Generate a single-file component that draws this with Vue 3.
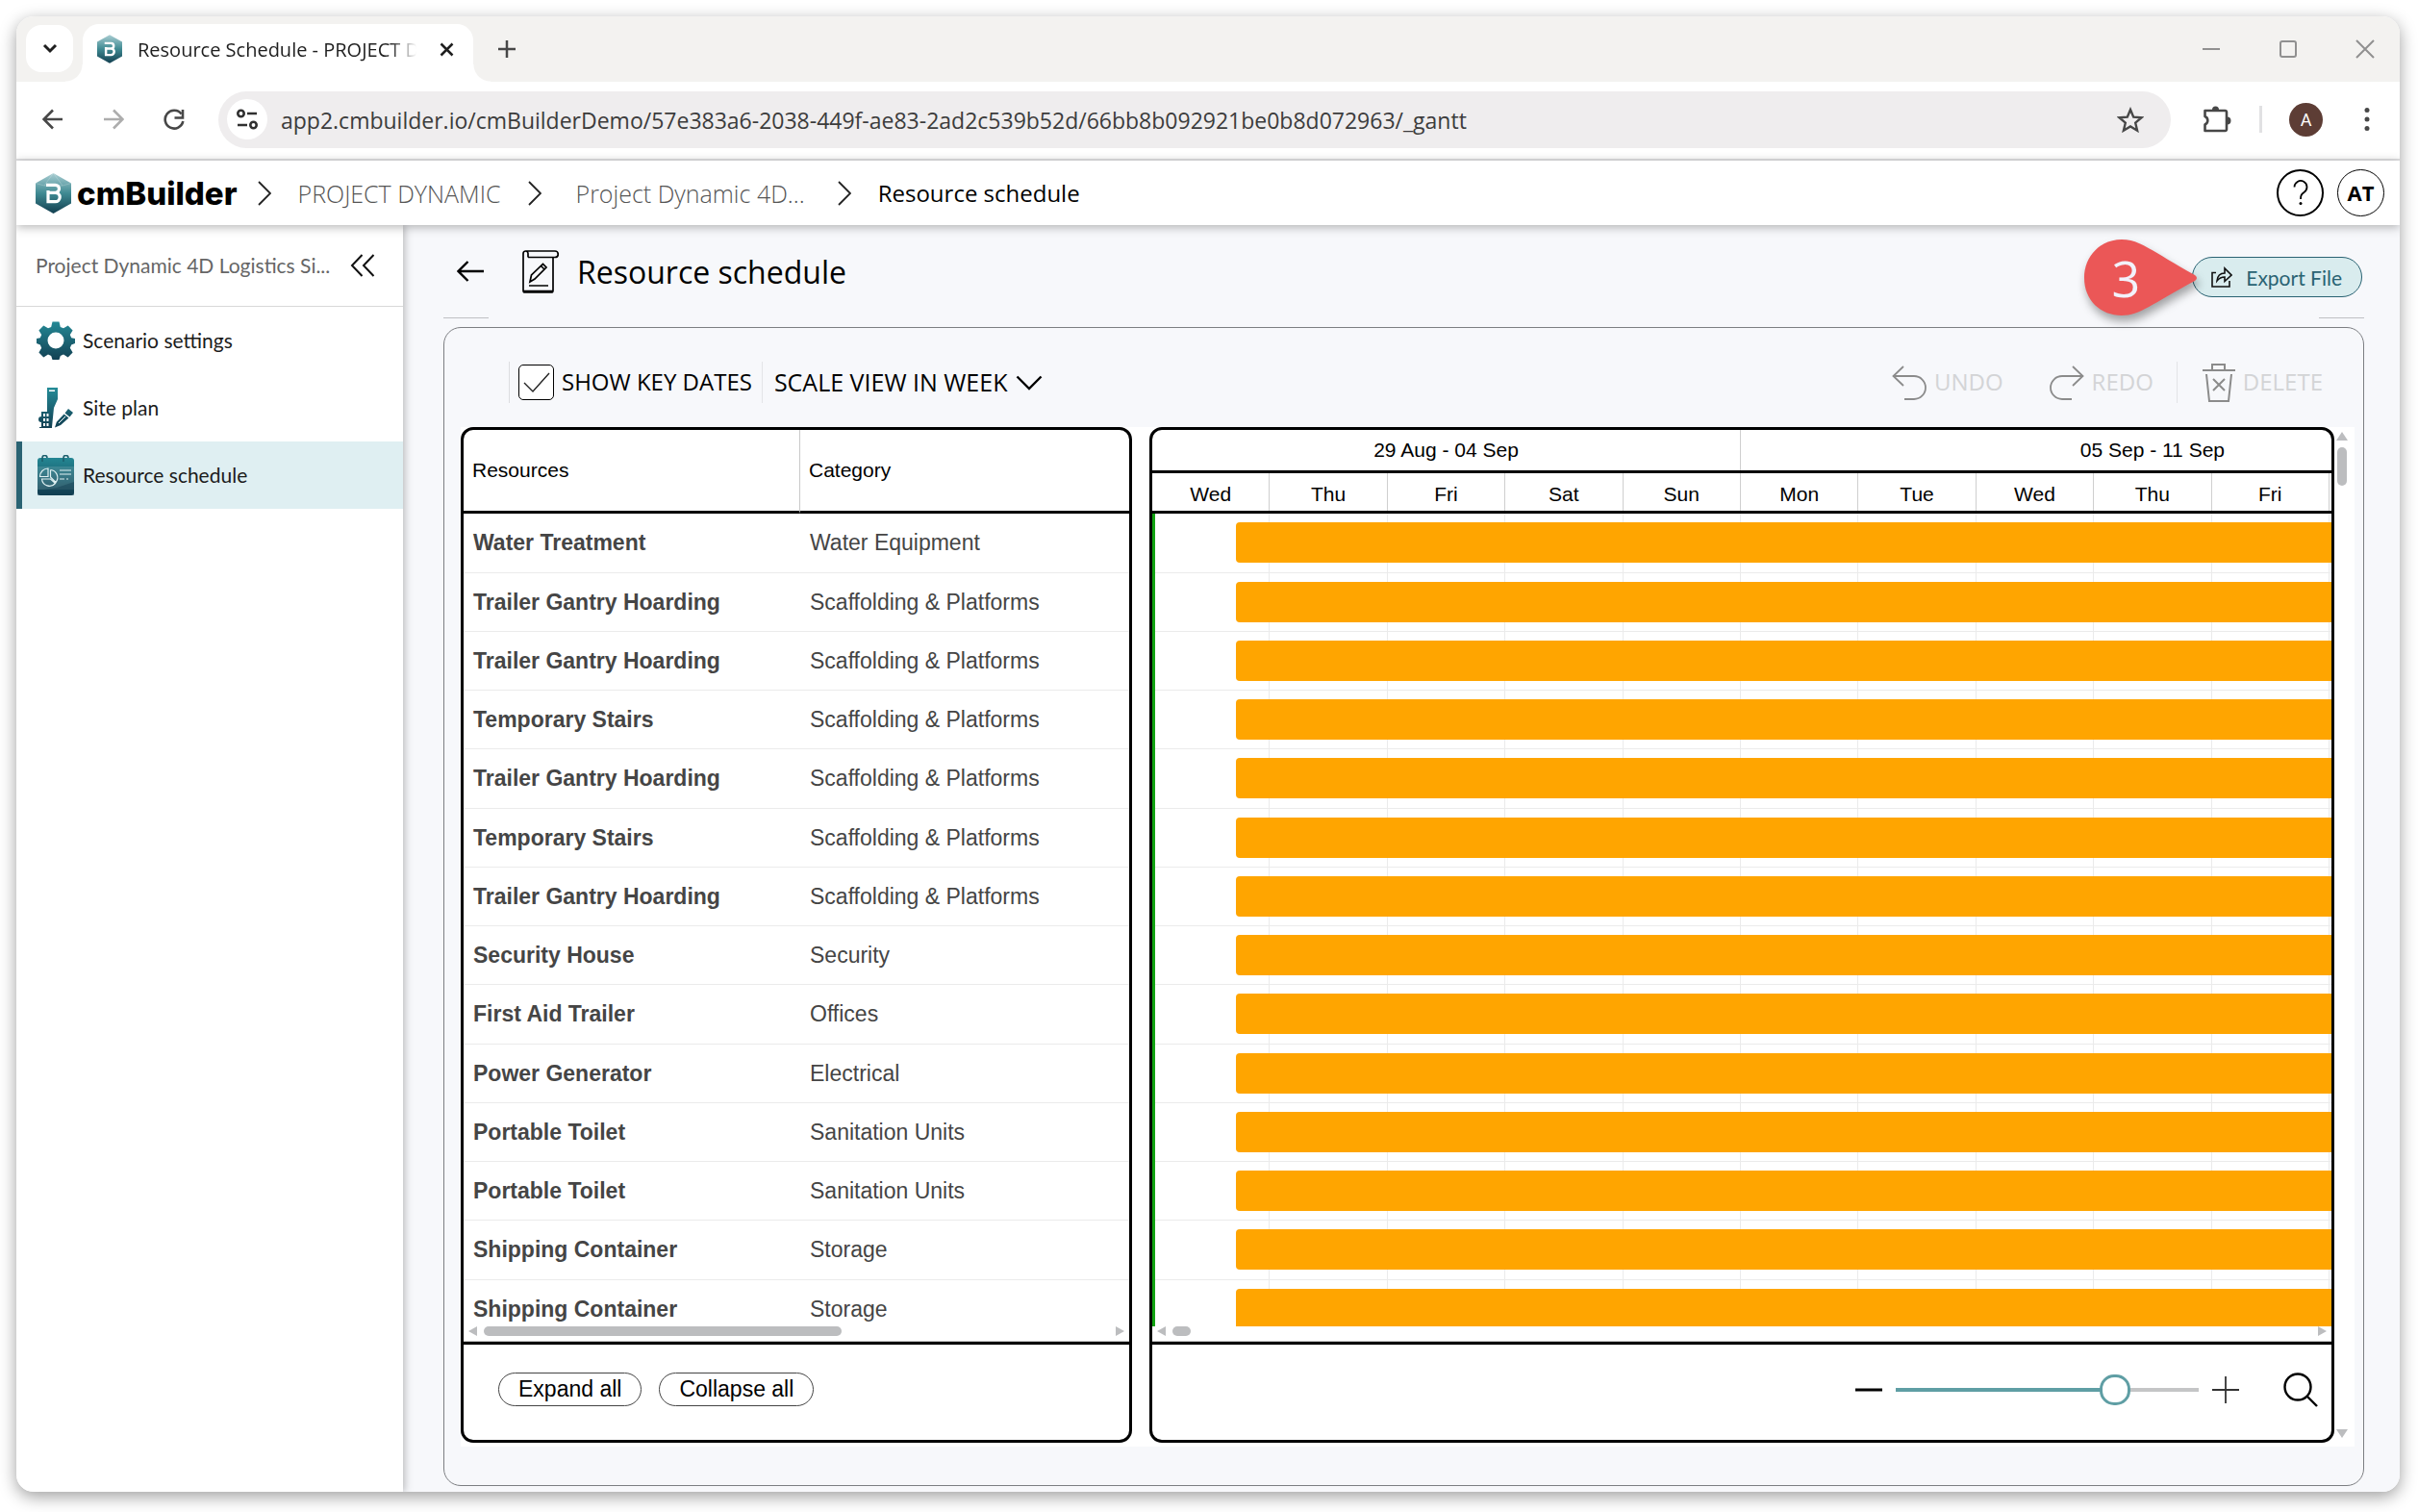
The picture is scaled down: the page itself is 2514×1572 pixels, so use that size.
<script setup>
import { ref } from 'vue'

const url = ref('app2.cmbuilder.io/cmBuilderDemo/57e383a6-2038-449f-ae83-2ad2c539b52d/66bb8b092921be0b8d072963/_gantt')
const showKeyDates = ref(true)
const scale = ref('week')
const zoom = ref(75)

const resources = [
  ['Water Treatment', 'Water Equipment'],
  ['Trailer Gantry Hoarding', 'Scaffolding & Platforms'],
  ['Trailer Gantry Hoarding', 'Scaffolding & Platforms'],
  ['Temporary Stairs', 'Scaffolding & Platforms'],
  ['Trailer Gantry Hoarding', 'Scaffolding & Platforms'],
  ['Temporary Stairs', 'Scaffolding & Platforms'],
  ['Trailer Gantry Hoarding', 'Scaffolding & Platforms'],
  ['Security House', 'Security'],
  ['First Aid Trailer', 'Offices'],
  ['Power Generator', 'Electrical'],
  ['Portable Toilet', 'Sanitation Units'],
  ['Portable Toilet', 'Sanitation Units'],
  ['Shipping Container', 'Storage'],
  ['Shipping Container', 'Storage'],
]
const days = ['Wed', 'Thu', 'Fri', 'Sat', 'Sun', 'Mon', 'Tue', 'Wed', 'Thu', 'Fri']
</script>

<template>
  <div class="desktop">
    <div class="window">
      <!-- Tab strip -->
      <div class="tabstrip">
        <button class="tab-search" aria-label="Search tabs">
          <svg width="16" height="12" viewBox="0 0 16 12"><path d="M2 2l6 6 6-6" fill="none" stroke="#1f1f1f" stroke-width="3" /></svg>
        </button>
        <div class="tab">
          <svg class="favicon" width="26" height="30" viewBox="0 0 37 42">
            <defs>
              <linearGradient id="hex" x1="0" y1="0" x2="0" y2="1">
                <stop offset="0" stop-color="#a9cdd2" /><stop offset="0.5" stop-color="#3f8a92" /><stop offset="1" stop-color="#123f50" />
              </linearGradient>
            </defs>
            <path d="M18.500 0L37 10.500V31.500L18.500 42L0 31.500V10.500Z" fill="url(#hex)" />
            <path d="M11 12.300h9.500a4 4 0 0 1 0 8H13M20.500 20.300a4.700 4.700 0 0 1 0 9.400H13V18" fill="none" stroke="#fff" stroke-width="3.500" />
          </svg>
          <span class="tab-title">Resource Schedule - PROJECT D</span>
          <button class="tab-close" aria-label="Close tab">
            <svg width="15" height="15" viewBox="0 0 15 15"><path d="M1.500 1.500l12 12m0-12l-12 12" stroke="#1f1f1f" stroke-width="2.500" /></svg>
          </button>
        </div>
        <button class="icon-btn new-tab" aria-label="New tab">
          <svg width="18" height="18" viewBox="0 0 18 18"><path d="M9 0v18M0 9h18" stroke="#474747" stroke-width="2.500" /></svg>
        </button>
        <div class="win-controls">
          <button class="icon-btn" aria-label="Minimize"><svg width="20" height="20" viewBox="0 0 20 20"><path d="M1 10h18" stroke="#909090" stroke-width="2" /></svg></button>
          <button class="icon-btn" aria-label="Maximize"><svg width="20" height="20" viewBox="0 0 20 20"><rect x="2" y="2" width="16" height="16" rx="2" fill="none" stroke="#909090" stroke-width="2" /></svg></button>
          <button class="icon-btn" aria-label="Close"><svg width="20" height="20" viewBox="0 0 20 20"><path d="M1 1l18 18M19 1L1 19" stroke="#909090" stroke-width="2" /></svg></button>
        </div>
      </div>

      <!-- Address bar -->
      <div class="toolbar">
        <button class="icon-btn" aria-label="Back"><svg width="22" height="22" viewBox="0 0 22 22"><path d="M21 11H2M11 1.500L1.500 11l9.500 9.500" fill="none" stroke="#474747" stroke-width="2.600" /></svg></button>
        <button class="icon-btn" aria-label="Forward"><svg width="22" height="22" viewBox="0 0 22 22"><path d="M1 11h19M11 1.500l9.500 9.500-9.500 9.500" fill="none" stroke="#adadad" stroke-width="2.600" /></svg></button>
        <button class="icon-btn" aria-label="Reload">
          <svg width="22" height="22" viewBox="0 0 22 22"><path d="M18.600 5.500A9.400 9.400 0 1 0 20.300 13" fill="none" stroke="#474747" stroke-width="2.600" /><path d="M20 1v8.500h-8.500" fill="none" stroke="#474747" stroke-width="2.600" /></svg>
        </button>
        <div class="omnibox">
          <button class="site-info" aria-label="View site information">
            <svg width="24" height="22" viewBox="0 0 24 22"><g fill="none" stroke="#303030" stroke-width="2.600"><circle cx="5.500" cy="5" r="3.200" /><path d="M12 5h10M2 17h10" /><circle cx="18.500" cy="17" r="3.200" /></g></svg>
          </button>
          <input v-model="url" class="url" type="text" aria-label="Address" spellcheck="false" />
          <button class="icon-btn" aria-label="Bookmark this page">
            <svg width="28" height="27" viewBox="0 0 28 27"><path d="M14 3l3.200 7.600 8.200.7-6.200 5.400 1.900 8L14 20.500l-7.100 4.200 1.900-8-6.200-5.400 8.200-.7z" fill="none" stroke="#474747" stroke-width="2.400" /></svg>
          </button>
        </div>
        <button class="icon-btn ext" aria-label="Extensions">
          <svg width="30" height="30" viewBox="0 0 30 30"><path d="M2.500 6h21a1.500 1.500 0 0 1 1.500 1.500v18a1.500 1.500 0 0 1-1.500 1.500h-21v-6.500a4.600 4.600 0 0 0 0-8.500z" fill="none" stroke="#474747" stroke-width="2.600" stroke-linejoin="round" /><path d="M10 5a3.500 3.500 0 0 1 7 0zM25.500 12.500a4 4 0 0 1 0 8z" fill="#474747" /></svg>
        </button>
        <span class="tb-sep"></span>
        <button class="avatar" aria-label="Profile">A</button>
        <button class="icon-btn" aria-label="Menu">
          <svg width="6" height="26" viewBox="0 0 6 26"><g fill="#474747"><circle cx="3" cy="3.500" r="2.500" /><circle cx="3" cy="13" r="2.500" /><circle cx="3" cy="22.500" r="2.500" /></g></svg>
        </button>
      </div>

      <!-- Application header -->
      <header class="app-header">
        <a class="brand" href="#">
          <svg width="37" height="42" viewBox="0 0 37 42">
            <path d="M18.500 0L37 10.500V31.500L18.500 42L0 31.500V10.500Z" fill="url(#hex)" />
            <path d="M0 10.500L9 13 18.500 0 28 13l9-2.500M9 13h19" fill="none" stroke="#fff" stroke-opacity=".2" />
            <path d="M11 12.300h9.500a4 4 0 0 1 0 8H13M20.500 20.300a4.700 4.700 0 0 1 0 9.400H13V18" fill="none" stroke="#fff" stroke-width="3.200" />
          </svg>
          <span>cmBuilder</span>
        </a>
        <nav class="crumbs" aria-label="Breadcrumb">
          <svg width="14" height="26" viewBox="0 0 14 26"><path d="M1 1l12 12L1 25" fill="none" stroke="#222" stroke-width="1.800" /></svg>
          <a href="#">PROJECT DYNAMIC</a>
          <svg width="14" height="26" viewBox="0 0 14 26"><path d="M1 1l12 12L1 25" fill="none" stroke="#222" stroke-width="1.800" /></svg>
          <a href="#" class="wide">Project Dynamic 4D...</a>
          <svg width="14" height="26" viewBox="0 0 14 26"><path d="M1 1l12 12L1 25" fill="none" stroke="#222" stroke-width="1.800" /></svg>
          <span class="current">Resource schedule</span>
        </nav>
        <button class="round help" aria-label="Help">
          <svg width="16" height="27" viewBox="0 0 16 27"><path d="M1.500 7.500a6.500 6.500 0 1 1 10 5.500C8.800 15 8 16 8 20" fill="none" stroke="#000" stroke-width="1.800" /><circle cx="8" cy="24.500" r="1.500" /></svg>
        </button>
        <button class="round user">AT</button>
      </header>

      <div class="body">
        <aside class="sidebar">
          <div class="side-head">
            <span>Project Dynamic 4D Logistics Si...</span>
            <button class="icon-btn" aria-label="Collapse sidebar">
              <svg width="26" height="24" viewBox="0 0 26 24"><path d="M12.500 1L2 12l10.500 11M24.500 1L14 12l10.500 11" fill="none" stroke="#111" stroke-width="2" /></svg>
            </button>
          </div>
          <a class="side-item" href="#">
            <svg width="40" height="42" viewBox="0 0 40 42">
              <defs>
                <linearGradient id="teal" gradientUnits="userSpaceOnUse" x1="0" y1="0" x2="0" y2="42">
                  <stop offset="0" stop-color="#258c98" /><stop offset="1" stop-color="#123f52" />
                </linearGradient>
              </defs>
              <path fill="url(#teal)" fill-rule="evenodd" d="M16.500 1.500h7l1.300 5.400 3.200 1.400 4.700-2.800 4.900 4.900-2.800 4.700 1.400 3.200 3.800.7v5l-3.800 1.600-1.400 3.200 2.800 4.700-4.900 4.900-4.700-2.800-3.200 1.400-1.300 3.900h-7l-1.300-3.900-3.200-1.400-4.700 2.800-4.900-4.900 2.800-4.700-1.400-3.200L0 24v-5l3.800-.7 1.400-3.200-2.800-4.700 4.900-4.900L12 8.300l3.200-1.400zM20 12.500a8.500 8.500 0 1 0 0 17 8.500 8.500 0 0 0 0-17z" />
            </svg>
            <span>Scenario settings</span>
          </a>
          <a class="side-item" href="#">
            <svg width="40" height="42" viewBox="0 0 40 42">
              <g fill="url(#teal)">
                <path d="M11 0h11v12l-4 9-2 20h-4V25h-1z" />
                <path d="M5 25h8v16h3v1H3v-1h2v-5a3 3 0 0 1 0-6z" />
                <path d="M33 22l5 4-3.500 4.500-5-4zM28.500 27.500l5 4-8.500 7.500-6 2.500 1.800-5.700z" />
              </g>
              <g fill="#fff"><path d="M13 2.500h6v1.500h-6zM7 27h2v3H7zM10.500 27h2v3h-2zM7 32h2v3H7zM10.500 32h2v3h-2zM7 37h2v3H7zM10.500 37h2v3h-2z" /></g>
              <path d="M30 30l-7 7" stroke="#fff" stroke-width="1" />
            </svg>
            <span>Site plan</span>
          </a>
          <a class="side-item active" href="#" aria-current="page">
            <svg width="40" height="42" viewBox="0 0 40 42">
              <rect x="1" y="3" width="38" height="39" rx="3" fill="url(#teal)" />
              <rect x="1" y="12" width="38" height="24" fill="#fff" fill-opacity=".13" />
              <path d="M1 37l20-3 18-6v14H1z" fill="#123f52" fill-opacity=".45" />
              <g fill="none" stroke="#1c5f6d" stroke-width="1.600"><path d="M6 7V3a2.500 2.500 0 0 1 5 0M28 7V3a2.500 2.500 0 0 1 5 0" /></g>
              <g fill="none" stroke="#dff0f2" stroke-width="1.200"><path d="M3.500 22.500a8.500 8.500 0 0 1 8.500-8.500v8.500zM14.500 15.500v7.500l5.500 5.500a8 8 0 0 0-5.500-13M5.500 25a8 8 0 0 0 14 4.500L14.500 25zM24 16h12M24 20h12M24 25h5M31 25h2" /></g>
            </svg>
            <span>Resource schedule</span>
          </a>
        </aside>

        <main class="main">
          <div class="page-head">
            <button class="icon-btn" aria-label="Back">
              <svg width="28" height="22" viewBox="0 0 28 22"><path d="M28 11H2M11.500 1L1.500 11l10 10" fill="none" stroke="#000" stroke-width="2.400" /></svg>
            </button>
            <svg class="doc" width="38" height="45" viewBox="0 0 38 45">
              <g fill="none" stroke="#000" stroke-width="1.700"><path d="M6 7.500V3.500C6 1.800 4.500 1 3.500 1S1 2 1 3.500V42a2 2 0 0 0 2 2h27a2 2 0 0 0 2-2V7.500M3.500 1H34a3.200 3.200 0 0 1 0 6.500H6M1 42.500h31" /><path d="M8 33l1.500-7L21.500 14.500l3.500 3.500-12 12zM19.500 16.500l3.500 3.500M7 37h20" /></g>
            </svg>
            <h1>Resource schedule</h1>
            <div class="export-wrap">
              <button class="export">
                <svg width="22" height="22" viewBox="0 0 22 22"><g fill="none" stroke="#111" stroke-width="1.600"><path d="M5 6.500H1V21h18V15" /><path d="M6 15c.5-5 3.500-8 8-8V2l7 7-7 6.500V11c-3.500 0-6 1.500-8 4z" /></g></svg>
                Export File
              </button>
              <div class="callout">
                <svg width="118" height="80" viewBox="0 0 118 80"><path d="M39 0C17 0 0 17 0 40s17 39 39 39c19 0 31-12 76-36q4-3 0-6C70 12 58 0 39 0z" fill="#eb5757" /></svg>
                <span>3</span>
              </div>
            </div>
          </div>
          <div class="rules"><i></i><i></i></div>

          <section class="panel">
            <div class="actions">
              <label class="keydates">
                <span class="check">
                  <input v-model="showKeyDates" type="checkbox" />
                  <svg v-if="showKeyDates" width="28" height="22" viewBox="0 0 28 22"><path d="M1 11l9 9L27 1" fill="none" stroke="#222" stroke-width="1.400" /></svg>
                </span>
                <span class="caption">SHOW KEY DATES</span>
              </label>
              <div class="scale">
                <select v-model="scale" aria-label="Scale view">
                  <option value="week">SCALE VIEW IN WEEK</option>
                </select>
                <svg width="28" height="16" viewBox="0 0 28 16"><path d="M1.500 1.500L14 14 26.500 1.500" fill="none" stroke="#000" stroke-width="2.400" /></svg>
              </div>
              <div class="history">
                <button disabled>
                  <svg width="36" height="36" viewBox="0 0 36 36"><path d="M12 1L1.500 11 12 21M1.500 11H23a12 12 0 0 1 0 24H13" fill="none" stroke="#8b8b8b" stroke-width="1.800" /></svg><span class="caption">UNDO</span>
                </button>
                <button disabled>
                  <svg width="36" height="36" viewBox="0 0 36 36"><path d="M24 1l10.500 10L24 21M34.500 11H13a12 12 0 0 0 0 24h10" fill="none" stroke="#8b8b8b" stroke-width="1.800" /></svg><span class="caption">REDO</span>
                </button>
                <button class="delete" disabled>
                  <svg width="34" height="40" viewBox="0 0 34 40"><path d="M0 7h34M10 7V1h13v6M4 11l3 28h20l3-28M11 16l12 12M23 16L11 28" fill="none" stroke="#8b8b8b" stroke-width="2" /></svg><span class="caption">DELETE</span>
                </button>
              </div>
            </div>

            <div class="workspace">
              <div class="panes">
                <div class="pane">
                  <div class="pane-body">
                    <table>
                      <thead>
                        <tr><th class="c1">Resources</th><th>Category</th></tr>
                      </thead>
                      <tbody>
                        <tr v-for="(r, i) in resources" :key="i"><td>{{ r[0] }}</td><td>{{ r[1] }}</td></tr>
                      </tbody>
                    </table>
                  </div>
                  <div class="hscroll"><i class="arr left"></i><i class="thumb wide-thumb"></i><i class="arr right"></i></div>
                  <div class="pane-foot left-foot">
                    <button class="pill">Expand all</button>
                    <button class="pill">Collapse all</button>
                  </div>
                </div>

                <div class="pane">
                  <div class="weeks"><div class="wk">29 Aug - 04 Sep</div><div class="wk next">05 Sep - 11 Sep</div></div>
                  <div class="days"><div v-for="(d, i) in days" :key="i">{{ d }}</div></div>
                  <div class="chart">
                    <div v-for="(r, i) in resources" :key="i" class="lane">
                      <span v-for="(d, j) in days" :key="j" class="cell"></span>
                      <span class="bar"></span>
                    </div>
                  </div>
                  <div class="hscroll"><i class="arr left"></i><i class="thumb"></i><i class="arr right"></i></div>
                  <div class="pane-foot right-foot">
                    <button class="icon-btn" aria-label="Zoom out"><svg width="28" height="28" viewBox="0 0 28 28"><path d="M0 14h28" stroke="#000" stroke-width="3" /></svg></button>
                    <input v-model="zoom" type="range" min="0" max="100" aria-label="Zoom" :style="{ '--fill': zoom + '%' }" />
                    <button class="icon-btn" aria-label="Zoom in"><svg width="28" height="28" viewBox="0 0 28 28"><path d="M0 14h28M14 0v28" stroke="#333" stroke-width="1.800" /></svg></button>
                    <button class="icon-btn find" aria-label="Search">
                      <svg width="36" height="36" viewBox="0 0 36 36"><g fill="none" stroke="#000" stroke-width="2.400"><circle cx="15" cy="15" r="13.500" /><path d="M24.500 24.500L35 35" /></g></svg>
                    </button>
                  </div>
                </div>
              </div>
              <div class="vscroll"><i class="arr up"></i><i class="vthumb"></i><i class="arr down"></i></div>
            </div>
          </section>
        </main>
      </div>
    </div>
  </div>
</template>

<style>
body { margin: 0; background: #fff; }
</style>

<style scoped>
* { box-sizing: border-box; }
button { border: 0; padding: 0; margin: 0; background: none; font: inherit; color: inherit; cursor: pointer; }
a { color: inherit; text-decoration: none; }
svg { display: block; flex: none; }

.desktop { height: 100vh; padding: 17px 19px 21px 17px; font-family: "Open Sans", "Noto Sans", sans-serif; color: #000; }
.window { height: 100%; display: flex; flex-direction: column; border-radius: 18px; overflow: hidden; background: #fff; box-shadow: 0 5px 17px rgba(0, 0, 0, .38); }
.icon-btn { display: flex; align-items: center; justify-content: center; flex: none; }

/* Tab strip */
.tabstrip { display: flex; align-items: flex-start; height: 68px; flex: none; padding: 8px 26px 0 10px; background: #f3f2f0; }
.tab-search { width: 49px; height: 49px; margin-top: 1px; border-radius: 16px; background: #fff; display: grid; place-items: center; }
.tab { position: relative; display: flex; align-items: center; width: 406px; height: 60px; margin-left: 10px; padding: 0 20px 8px 15px; border-radius: 17px 17px 0 0; background: #fff; font-size: 20px; color: #1f1f1f; }
.tab::before, .tab::after { content: ""; position: absolute; bottom: 0; width: 18px; height: 18px; }
.tab::before { right: 100%; background: radial-gradient(circle at 0 0, transparent 17px, #fff 18px); }
.tab::after { left: 100%; background: radial-gradient(circle at 100% 0, transparent 17px, #fff 18px); }
.tab-title { flex: 1; margin: 0 16px; white-space: nowrap; mask-image: linear-gradient(90deg, #000 calc(100% - 36px), transparent calc(100% - 8px)); }
.new-tab { width: 18px; height: 52px; margin-left: 26px; }
.win-controls { margin-left: auto; display: flex; gap: 60px; height: 52px; }

/* Address bar */
.toolbar { display: flex; align-items: center; height: 82px; flex: none; padding: 0 31px 2px 27px; border-bottom: 2px solid #e1e1e3; gap: 41px; background: #fff; }
.omnibox { flex: 1; display: flex; align-items: center; height: 59px; margin-left: -6px; padding: 0 28px 0 9px; border-radius: 30px; background: #efedee; }
.site-info { width: 42px; height: 42px; border-radius: 50%; background: #fff; display: grid; place-items: center; }
.url { flex: 1; min-width: 0; margin: 0 14px; padding: 2px 0 0; border: 0; outline: 0; background: none; font: 23px "Open Sans", sans-serif; color: #3c3c3c; }
.ext { margin-left: -8px; }
.tb-sep { width: 3px; height: 28px; margin: 0 -13px 0 -12px; background: #e1e1e3; }
.avatar { width: 35px; height: 35px; margin-right: 2px; border-radius: 50%; background: #5d3d35; color: #fff; font: 18px Roboto, sans-serif; }

/* Application header */
.app-header { position: relative; z-index: 2; display: flex; align-items: center; height: 67px; flex: none; padding: 0 16px 0 20px; background: #fff; box-shadow: 0 2px 10px rgba(0, 0, 0, .3); }
.brand { display: flex; align-items: center; gap: 6px; font: 800 33px Inter, sans-serif; }
.crumbs { flex: 1; display: flex; align-items: center; gap: 28px; margin-left: 21px; font-size: 25px; font-weight: 300; color: #555; white-space: nowrap; }
.crumbs .wide { margin: 0 6px 0 8px; }
.crumbs .current { color: #000; font-size: 24px; font-weight: 400; }
.round { width: 49px; height: 49px; border-radius: 50%; display: grid; place-items: center; margin-left: 14px; border: 1px solid #000; background: #fff; }
.help { border-width: 2px; }
.user { padding-bottom: 2px; font: 700 22px "Open Sans", sans-serif; }

.body { flex: 1; min-height: 0; display: flex; }

/* Sidebar */
.sidebar { position: relative; z-index: 1; width: 402px; flex: none; background: #fff; box-shadow: 2px 0 8px rgba(0, 0, 0, .25); font: 21px Lato, sans-serif; }
.sidebar span { padding-bottom: 2px; }
.side-head { display: flex; align-items: center; justify-content: space-between; height: 85px; padding: 0 29px 0 20px; border-bottom: 1px solid #d8d8d8; color: #666; white-space: nowrap; }
.side-item { display: flex; align-items: center; gap: 8px; height: 70px; padding-left: 21px; color: #1c1c1c; }
.side-item.active { background: #dfeff2; box-shadow: inset 6px 0 #2a6373; }

/* Page heading */
.main { flex: 1; min-width: 0; display: flex; flex-direction: column; padding: 0 37px 6px 42px; background: #f7f8fb; }
.page-head { display: flex; align-items: center; height: 96px; flex: none; padding: 0 2px 0 14px; }
.doc { margin-left: 40px; }
h1 { margin: 0 0 0 19px; font-size: 32px; font-weight: 400; }
.export-wrap { position: relative; margin: 12px 0 0 auto; }
.export { display: flex; align-items: center; gap: 14px; height: 42px; padding: 0 20px 0 19px; border: 1px solid #2a6373; border-radius: 21px; background: #d9ecee; color: #2a6373; font: 21px Lato, sans-serif; }
.callout { position: absolute; right: calc(100% - 6px); top: -18px; filter: drop-shadow(2px 6px 5px rgba(0, 0, 0, .35)); }
.callout span { position: absolute; inset: 0 32px 2px 0; display: grid; place-items: center; color: #f2f2fc; font: 52px "Open Sans", sans-serif; }
.rules { display: flex; justify-content: space-between; flex: none; margin-bottom: 9px; }
.rules i { width: 47px; height: 1px; background: #bfc0c4; }

/* Panel */
.panel { flex: 1; min-height: 0; display: flex; flex-direction: column; padding: 35px 9px 40px 17px; border: 1px solid #7c7e82; border-radius: 18px; }
.actions { display: flex; flex: none; height: 43px; margin: 0 33px 25px 50px; font-size: 24px; white-space: nowrap; }
.keydates { display: flex; align-items: center; gap: 8px; padding: 0 10px 0 9px; border-left: 1px solid #dcdde0; border-right: 1px solid #e3e4e7; }
.caption { padding-bottom: 2px; }
.check { display: grid; place-items: center; }
.check > * { grid-area: 1 / 1; }
.check input { appearance: none; width: 37px; height: 37px; margin: 0; border: 1px solid #000; border-radius: 5px; background: #fff; }
.check svg { pointer-events: none; }
.scale { display: flex; align-items: center; gap: 8px; padding-left: 12px; }
.scale select { appearance: none; border: 0; padding: 0 0 2px; margin: 0; background: none; font: inherit; font-size: 25px; color: #000; }
.history { display: flex; align-items: center; gap: 48px; margin-left: auto; }
.history button { display: flex; align-items: center; gap: 8px; height: 43px; color: #d3d4d6; }
.history .delete { margin-left: -24px; padding-left: 26px; border-left: 1px solid #e3e4e7; }

.workspace { flex: 1; min-height: 0; display: flex; padding-bottom: 4px; background: #fff; font-family: "Liberation Sans", Arial, sans-serif; }
.panes { flex: 1; min-width: 0; display: grid; grid-template-columns: minmax(0, 698fr) minmax(0, 1232fr); grid-template-rows: minmax(0, 1fr); gap: 18px; }
.pane { display: flex; flex-direction: column; min-height: 0; border: 3px solid #000; border-radius: 13px; overflow: hidden; }
.pane-body, .chart { flex: 1; min-height: 0; overflow: hidden; }

table { width: 100%; border-collapse: separate; border-spacing: 0; table-layout: fixed; font-size: 23px; color: #454545; }
th { height: 87px; padding: 0 9px; border-bottom: 3px solid #000; text-align: left; font-size: 21px; font-weight: 400; color: #000; }
.c1 { width: 350px; border-right: 1px solid #c9c9c9; }
td { height: 61px; padding: 0 10px; border-bottom: 1px solid #ebebeb; white-space: nowrap; }
td:first-child { font-weight: 700; }
tbody tr:nth-child(4n + 1) td { height: 62px; }

.weeks, .days { display: flex; flex: none; border-bottom: 3px solid #000; font-size: 21px; padding-right: 2px; }
.weeks { height: 45px; overflow: hidden; }
.days { height: 42px; }
.weeks div, .days div { display: grid; place-items: center; flex: none; white-space: nowrap; }
.wk { width: 50%; border-right: 1px solid #cfcfcf; }
.wk.next { width: 70%; }
.days div { width: 10%; padding-top: 4px; border-right: 1px solid #cfcfcf; }
.chart { position: relative; }
.chart::before { content: ""; position: absolute; inset: 0 auto 0 0; width: 3px; z-index: 1; background: #12a312; }
.lane { position: relative; display: flex; height: 61px; padding-right: 2px; border-bottom: 1px solid #ebebeb; }
.lane:nth-child(4n + 1) { height: 62px; }
.cell { flex: 1; border-right: 1px solid #ebebeb; }
.bar { position: absolute; left: 7.1%; right: 0; top: 9px; height: 42px; border-radius: 4px 0 0 4px; background: #ffa500; }

.hscroll { display: flex; align-items: flex-start; flex: none; height: 16px; padding: 0 5px; border-bottom: 1px solid #c4c4c4; }
.arr { width: 0; height: 0; border: 5px solid transparent; }
.arr.left { border-width: 5px 9px 5px 0; border-right-color: #bcbdbf; }
.arr.right { margin-left: auto; border-width: 5px 0 5px 9px; border-left-color: #bcbdbf; }
.arr.up { border-width: 0 6px 9px; border-bottom-color: #bcbdbf; }
.arr.down { margin-top: auto; border-width: 9px 6px 0; border-top-color: #bcbdbf; }
.thumb { width: 19px; height: 10px; margin-left: 7px; border-radius: 5px; background: #bcbdbf; }
.wide-thumb { width: 372px; }
.vscroll { display: flex; flex-direction: column; align-items: center; width: 21px; padding: 5px 5px 5px 0; }
.vthumb { width: 10px; height: 40px; margin-top: 7px; border-radius: 5px; background: #bcbdbf; }

.pane-foot { display: flex; align-items: center; flex: none; height: 102px; padding-bottom: 6px; border-top: 3px solid #000; }
.left-foot { gap: 18px; padding-left: 36px; }
.pill { height: 35px; padding: 0 20px; border: 1px solid #444; border-radius: 18px; background: #fff; font-size: 23px; }
.right-foot { justify-content: flex-end; gap: 14px; padding-right: 14px; }
.find { margin-left: 32px; }
input[type="range"] { appearance: none; width: 315px; height: 34px; margin: 0; background: linear-gradient(90deg, #5f9ea4 var(--fill), #c4c5c6 var(--fill)) center / 100% 4px no-repeat; }
input[type="range"]::-webkit-slider-thumb { appearance: none; width: 32px; height: 32px; border: 3px solid #5f9ea4; border-radius: 15px; background: #fff; }
</style>
